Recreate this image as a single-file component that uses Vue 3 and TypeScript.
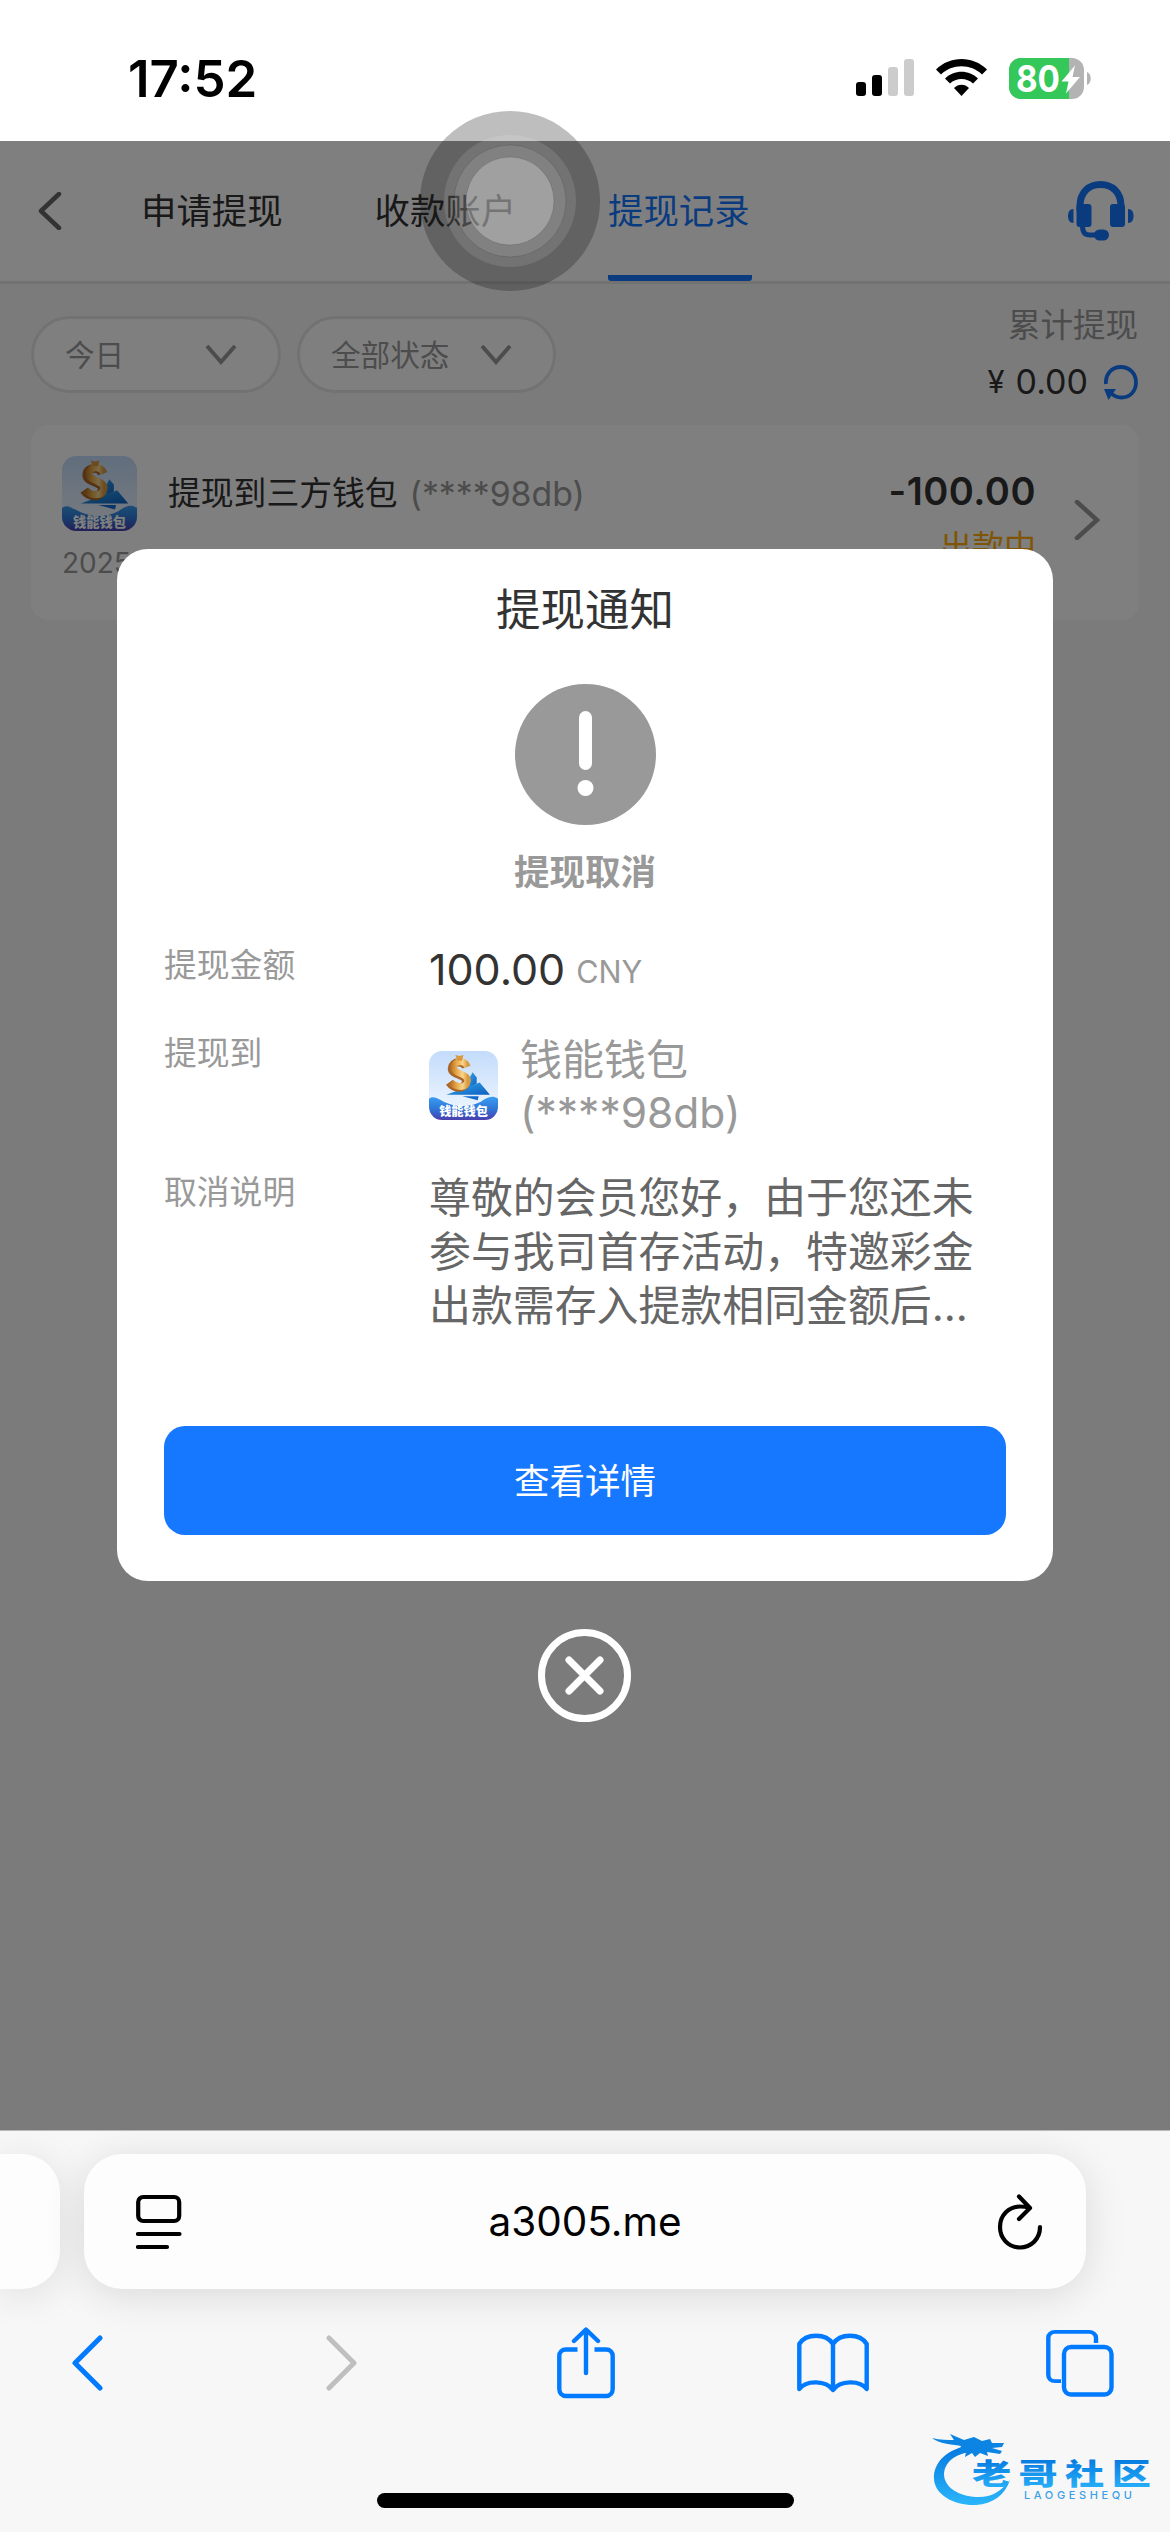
<script setup lang="ts">
import { ref } from 'vue'

const tabs = ['申请提现', '收款账户', '提现记录']
const activeTab = ref(2)

const filters = [
  { label: '今日', size: 'short' },
  { label: '全部状态', size: 'long' },
]

const showNotice = ref(true)
const reason = '尊敬的会员您好，由于您还未参与我司首存活动，特邀彩金出款需存入提款相同金额后...'
</script>

<template>
  <div class="phone">
    <!-- shared artwork of the wallet icon -->
    <svg class="defs" width="0" height="0">
      <defs>
        <linearGradient id="wSky" x1="0" y1="0" x2="0" y2="1">
          <stop offset="0" stop-color="#c3dcfb" />
          <stop offset="1" stop-color="#f4f9ff" />
        </linearGradient>
        <linearGradient id="wSea" x1="0" y1="0" x2="0" y2="1">
          <stop offset="0" stop-color="#3a9df0" />
          <stop offset="0.5" stop-color="#2f78d8" />
          <stop offset="1" stop-color="#4a3fae" />
        </linearGradient>
        <linearGradient id="wGold" x1="0" y1="0" x2="1" y2="0">
          <stop offset="0" stop-color="#b87426" />
          <stop offset="0.35" stop-color="#e9a94a" />
          <stop offset="0.7" stop-color="#f8d58c" />
          <stop offset="1" stop-color="#d99a40" />
        </linearGradient>
        <linearGradient id="wBlue" x1="0" y1="0" x2="1" y2="1">
          <stop offset="0" stop-color="#35a8ee" />
          <stop offset="1" stop-color="#0d5fc0" />
        </linearGradient>
        <clipPath id="wClip"><rect width="68" height="68" rx="13" /></clipPath>
        <symbol id="wallet" viewBox="0 0 68 68">
          <g clip-path="url(#wClip)">
            <rect width="68" height="68" fill="url(#wSky)" />
            <path d="M0 47C5 43 10 48 17 51C28 56 42 55 51 50C57 46 62 43 68 47V68H0Z" fill="url(#wSea)" />
            <path d="M38 30L43 21L47 26V32L40 36Z" fill="url(#wBlue)" />
            <path d="M17 43L50 31L60 43Z" fill="url(#wBlue)" />
            <path d="M33 44.500L49 44.500L48 48.500Z" fill="#1269cc" />
            <path d="M36.500 16C34 9 23 10 22.500 17C22 24 37 23 36.500 30C36 38 25 38 20 31" fill="none" stroke="#a8662a" stroke-width="8" />
            <path d="M38 15.500C35 8.500 25 9 24.500 16C24 23 39 22 38 29.500C37 37 27 36.500 21.500 31" fill="none" stroke="url(#wGold)" stroke-width="6.500" />
            <path d="M26 4L30 5L34 4L32.500 9.500H28Z" fill="#d9983e" />
            <text x="34" y="64.500" text-anchor="middle" class="wallet-name">钱能钱包</text>
          </g>
        </symbol>
      </defs>
    </svg>

    <div class="statusbar">
      <span class="clock">17:52</span>
      <div class="indicators">
        <svg width="58" height="38" viewBox="0 0 58 38">
          <rect x="0" y="23" width="10" height="14" rx="3" />
          <rect x="16" y="16" width="10" height="21" rx="3" />
          <rect x="32" y="8" width="10" height="29" rx="3" fill="#ccc" />
          <rect x="48" y="0" width="10" height="37" rx="3" fill="#ccc" />
        </svg>
        <svg width="51" height="38" viewBox="0 0 51 38">
          <path d="M0 10.500C14-3.500 37-3.500 51 10.500L46 15.500C35 4.500 16 4.500 5 15.500Z" />
          <path d="M9 19.500C18 10.500 33 10.500 42 19.500L37 24.500C31 18.500 20 18.500 14 24.500Z" />
          <path d="M18 29C22 24.500 29 24.500 33 29L25.500 37Z" />
        </svg>
        <svg class="battery" width="83" height="41" viewBox="0 0 83 41">
          <clipPath id="bat"><rect width="75" height="41" rx="12" /></clipPath>
          <g clip-path="url(#bat)">
            <rect width="75" height="41" fill="#b3b3b3" />
            <rect width="60" height="41" fill="#34c759" />
          </g>
          <path d="M78 14C83 16 83 25 78 27Z" fill="#b3b3b3" />
          <text x="7" y="34" textLength="44" lengthAdjust="spacingAndGlyphs" class="battery-text">80</text>
          <path d="M66 7.500L52.500 23.500H59.500L57 35.500L71 19H63.500Z" fill="#fff" />
        </svg>
      </div>
    </div>

    <div class="page">
      <div class="header">
        <svg class="back" width="24" height="38" viewBox="0 0 24 38">
          <path d="M21 2L3 19L21 36" />
        </svg>
        <div class="tabs">
          <span
            v-for="(tab, i) in tabs"
            :key="tab"
            :class="['tab', { active: i === activeTab }]"
            @click="activeTab = i"
          >{{ tab }}</span>
        </div>
        <svg class="service" width="68" height="60" viewBox="0 0 68 60">
          <path d="M13 30V25C13 11 22 3.500 33.500 3.500C45 3.500 54 11 54 25V30" fill="none" stroke="#1677ff" stroke-width="7" />
          <rect x="9.500" y="23" width="15" height="23" rx="3" />
          <rect x="43" y="23" width="15" height="23" rx="3" />
          <path d="M6.500 28V42C2.500 42 1 39 1 35C1 31 2.500 28 6.500 28Z" />
          <path d="M61 28V42C65 42 66.500 39 66.500 35C66.500 31 65 28 61 28Z" />
          <path d="M15.500 45C15.500 51.500 18 54 23 54H30" fill="none" stroke="#1677ff" stroke-width="5" />
          <rect x="27" y="48.500" width="15" height="11" rx="5.500" />
        </svg>
      </div>

      <div class="toolbar">
        <div class="filters">
          <div v-for="f in filters" :key="f.label" :class="['filter', f.size]">
            <span>{{ f.label }}</span>
            <svg width="32" height="22" viewBox="0 0 32 22">
              <path d="M2 2L16 18L30 2" />
            </svg>
          </div>
        </div>
        <div class="total">
          <span class="total-label">累计提现</span>
          <div class="total-row">
            <span class="yen">¥</span>
            <span class="total-value">0.00</span>
            <svg width="34" height="35" viewBox="0 0 34 35">
              <path d="M2 19C1 10 7 2 17 2C25.500 2 32 8.500 32 17.500C32 26 26 32.500 17.500 32.500C13.500 32.500 10 31 7.500 28.500" fill="none" stroke="#1677ff" stroke-width="3.800" />
              <path d="M0 24H12L4.500 35Z" fill="#1677ff" />
            </svg>
          </div>
        </div>
      </div>

      <div class="record">
        <div class="record-left">
          <div class="record-title">
            <svg width="75" height="75"><use href="#wallet" /></svg>
            <span class="record-name">提现到三方钱包</span>
            <span class="record-account">(****98db)</span>
          </div>
          <span class="record-date">2025</span>
        </div>
        <div class="record-right">
          <span class="record-amount">-100.00</span>
          <span class="record-state">出款中</span>
        </div>
        <svg class="record-arrow" width="27" height="40" viewBox="0 0 27 40">
          <path d="M3 2L23 20L3 38" />
        </svg>
      </div>

      <div v-if="showNotice" class="overlay">
        <div class="modal">
          <div class="modal-title">提现通知</div>
          <svg class="warn" width="141" height="141" viewBox="0 0 141 141">
            <circle cx="70.500" cy="70.500" r="70.500" fill="#999" />
            <rect x="64" y="27" width="13" height="59" rx="6.500" fill="#fff" />
            <circle cx="70.500" cy="104" r="8" fill="#fff" />
          </svg>
          <div class="modal-state">提现取消</div>

          <div class="row row-amount">
            <span class="label">提现金额</span>
            <div class="amount">100.00<span class="currency">CNY</span></div>
          </div>
          <div class="row row-target">
            <span class="label">提现到</span>
            <div class="target">
              <svg width="69" height="69"><use href="#wallet" /></svg>
              <div>
                <div class="target-name">钱能钱包</div>
                <div class="target-account">(****98db)</div>
              </div>
            </div>
          </div>
          <div class="row">
            <span class="label">取消说明</span>
            <p class="reason">{{ reason }}</p>
          </div>

          <button class="detail">查看详情</button>
        </div>
        <svg class="close" width="93" height="93" viewBox="0 0 93 93" @click="showNotice = false">
          <circle cx="46.500" cy="46.500" r="43" />
          <path d="M31 31L62 62M62 31L31 62" />
        </svg>
      </div>
    </div>

    <div class="browser">
      <div class="address-row">
        <div class="prev-card"></div>
        <div class="address">
          <svg width="46" height="56" viewBox="0 0 46 56" class="stroke-dark">
            <rect x="2.200" y="3" width="41" height="24" rx="5" />
            <path d="M2 40H43.500M2 53H31" />
          </svg>
          <span class="url">a3005.me</span>
          <svg width="46" height="56" viewBox="0 0 46 56" class="stroke-dark">
            <path d="M43 33C43 45 34 53.500 23 53.500C11 53.500 3 44 3 33C3 21 12 12.500 23 12.500C27 12.500 30 13 32.500 14M22 2.500L33 14L22 25" />
          </svg>
        </div>
      </div>

      <div class="actions">
        <svg width="32" height="56" viewBox="0 0 32 56" class="stroke-blue">
          <path d="M29 3L4 28L29 53" />
        </svg>
        <svg width="32" height="56" viewBox="0 0 32 56" class="stroke-grey">
          <path d="M3 3L28 28L3 53" />
        </svg>
        <svg width="58" height="72" viewBox="0 0 58 72" class="stroke-blue thin">
          <path d="M20.500 22.500H9C5 22.500 2.300 25 2.300 29V62C2.300 66 5 69 9 69H49C53 69 55.700 66 55.700 62V29C55.700 25 53 22.500 49 22.500H37.500" stroke-linecap="butt" />
          <path d="M29 46V3M17 14L29 2.500L41 14" />
        </svg>
        <svg width="72" height="60" viewBox="0 0 72 60" class="stroke-blue thin">
          <path d="M36 11C29 0 9 0 2.300 11V56C9 47 29 47 36 57C43 47 63 47 69.700 56V11C63 0 43 0 36 11ZM36 11V56" />
        </svg>
        <svg width="68" height="67" viewBox="0 0 68 67" class="stroke-blue thin">
          <path d="M50 15V9C50 5 47 2.300 43 2.300H9C5 2.300 2.300 5 2.300 9V52C2.300 57 5 59.500 9 59.500H15" stroke-linecap="butt" transform="scale(1 0.860)" />
          <rect x="18" y="17" width="47.500" height="47.500" rx="7" />
        </svg>
      </div>
      <div class="home-bar"></div>

      <!-- community mark in the corner -->
      <svg class="mark" width="230" height="84" viewBox="0 0 230 84">
        <defs>
          <linearGradient id="mk" x1="0" y1="0" x2="0" y2="1">
            <stop offset="0" stop-color="#0477de" />
            <stop offset="1" stop-color="#2bb6fc" />
          </linearGradient>
        </defs>
        <path d="M42 17C18 20 3 34 4 51C5 68 26 78 46 77C63 76 75 67 80 52C71 64 60 70 46 69C29 68 15 60 14 47C14 35 24 26 41 24Z" fill="url(#mk)" />
        <path d="M2 10C10 12 18 12 24 12L20 6L34 12L44 9L52 13L60 11L62 15L74 15L72 19L62 20L72 23L70 26L57 24L58 28L50 25L45 29L42 25L35 29L36 24L28 27L31 18C20 16 10 16 2 10Z" fill="#0b84e3" />
        <text transform="translate(42 57) scale(1.35 1)" class="mark-name" fill="url(#mk)">老哥社区</text>
        <text x="94" y="70.500" textLength="108" class="mark-latin">LAOGESHEQU</text>
      </svg>
    </div>

    <!-- floating assistive button -->
    <svg class="assistive" width="180" height="180" viewBox="0 0 180 180">
      <circle cx="90" cy="90" r="90" fill="#1a1a1a" fill-opacity="0.283" />
      <circle cx="90" cy="90" r="66" fill="#fff" fill-opacity="0.11" />
      <circle cx="90" cy="90" r="56" fill="#fff" fill-opacity="0.1" stroke="#000" stroke-opacity="0.12" />
      <circle cx="90" cy="90" r="44" fill="#fff" fill-opacity="0.25" stroke="#000" stroke-opacity="0.12" />
    </svg>
  </div>
</template>

<style>
body {
  margin: 0;
}
</style>

<style scoped>
.phone {
  position: relative;
  width: 1170px;
  height: 2532px;
  display: flex;
  flex-direction: column;
  overflow: hidden;
  background: #fff;
  font-family: Inter, 'Noto Sans CJK SC', sans-serif;
  color: #333;
}

svg {
  display: block;
  flex-shrink: 0;
}

.defs {
  position: absolute;
}

.wallet-name {
  font-size: 12px;
  font-weight: 900;
  fill: #fff;
}

/* status bar */
.statusbar {
  height: 141px;
  flex-shrink: 0;
  box-sizing: border-box;
  padding: 15px 78px 0 128px;
  display: flex;
  justify-content: space-between;
  align-items: center;
  color: #000;
}

.clock {
  font-size: 51px;
  font-weight: 600;
}

.indicators {
  display: flex;
  align-items: center;
  gap: 22px;
}

.battery {
  overflow: visible;
}

.battery-text {
  font-size: 37px;
  font-weight: 700;
  fill: #fff;
}

/* page */
.page {
  position: relative;
  height: 1989px;
  flex-shrink: 0;
  background: #f7f7f7;
}

.header {
  height: 140px;
  padding: 0 35px 0 38px;
  display: flex;
  align-items: center;
  background: #fff;
  border-bottom: 3px solid #e5e5e5;
}

.back {
  fill: none;
  stroke: #666;
  stroke-width: 4.5;
  stroke-linecap: round;
  stroke-linejoin: round;
}

.tabs {
  flex: 1;
  height: 100%;
  margin-left: 79px;
  display: flex;
  gap: 89.5px;
}

.tab {
  width: 144px;
  height: 134px;
  line-height: 141px;
  font-size: 35.4px;
  white-space: nowrap;
}

.tab.active {
  color: #1677ff;
  border-bottom: 6px solid #1677ff;
  border-radius: 3px;
}

.service {
  fill: #1677ff;
}

.toolbar {
  height: 141px;
  padding: 0 32px 0 31px;
  display: flex;
  justify-content: space-between;
}

.filters {
  display: flex;
  gap: 16px;
  padding-top: 32px;
}

.filter {
  height: 77px;
  box-sizing: border-box;
  padding: 0 41px 0 31px;
  display: flex;
  align-items: center;
  justify-content: space-between;
  border: 3px solid #e5e5e5;
  border-radius: 39px;
  background: #fff;
  font-size: 29.6px;
  line-height: 40px;
  color: #999;
}

.filter.short {
  width: 250px;
}

.filter.long {
  width: 259px;
}

.filter svg {
  fill: none;
  stroke: #999;
  stroke-width: 4;
}

.total {
  padding-top: 22px;
  display: flex;
  flex-direction: column;
  align-items: flex-end;
}

.total-label {
  font-size: 32.5px;
  line-height: 40px;
  color: #999;
}

.total-row {
  height: 70px;
  margin-top: 1px;
  display: flex;
  align-items: center;
}

.yen {
  width: 28px;
  font-size: 31px;
  line-height: 70px;
}

.total-value {
  margin-right: 16px;
  font-size: 34px;
  line-height: 70px;
}

.record {
  height: 195px;
  box-sizing: border-box;
  margin: 0 31px;
  padding: 0 38px 0 31px;
  display: flex;
  border-radius: 18px;
  background: #fff;
}

.record-left {
  flex: 1;
  padding-top: 31px;
}

.record-title {
  display: flex;
  align-items: center;
  font-size: 32.8px;
  line-height: 75px;
}

.record-name {
  margin-left: 31px;
}

.record-account {
  margin-left: 12px;
  font-size: 33.8px;
  color: #999;
}

.record-date {
  display: block;
  margin-top: 12px;
  font-size: 28px;
  line-height: 40px;
  color: #999;
}

.record-right {
  padding-top: 41px;
  display: flex;
  flex-direction: column;
  align-items: flex-end;
}

.record-amount {
  font-size: 38px;
  line-height: 50px;
  font-weight: 600;
  letter-spacing: 0.5px;
}

.record-state {
  margin-top: 9px;
  font-size: 32px;
  line-height: 44px;
  color: #ffaa09;
}

.record-arrow {
  margin: 75px 0 0 38px;
  fill: none;
  stroke: #999;
  stroke-width: 4.5;
  stroke-linecap: round;
}

/* notice */
.overlay {
  position: absolute;
  inset: 0;
  display: flex;
  flex-direction: column;
  align-items: center;
  justify-content: center;
  background: rgba(0, 0, 0, 0.5);
}

.modal {
  width: 936px;
  height: 1032px;
  box-sizing: border-box;
  padding: 1px 47px 0;
  border-radius: 31px;
  background: #fff;
}

.modal-title {
  font-size: 44.5px;
  line-height: 120px;
  text-align: center;
}

.warn {
  margin: 14px auto 0;
}

.modal-state {
  margin-top: 23px;
  font-size: 35.5px;
  line-height: 50px;
  font-weight: 600;
  text-align: center;
  color: #999;
}

.row {
  display: flex;
}

.row-amount {
  height: 60px;
  margin: 42px 0 28px;
}

.row-target {
  height: 111px;
  margin-bottom: 28px;
}

.label {
  width: 265px;
  flex-shrink: 0;
  font-size: 32.8px;
  line-height: 50px;
  color: #999;
}

.amount {
  font-size: 43px;
  line-height: 59px;
}

.currency {
  margin-left: 11px;
  font-size: 30.6px;
  vertical-align: 2px;
  color: #999;
}

.target {
  padding-top: 4px;
  display: flex;
  align-items: center;
  gap: 22px;
  font-size: 42px;
  line-height: 53px;
  color: #999;
}

.target-account {
  font-size: 42.5px;
}

.reason {
  margin: 4px 0 0;
  font-size: 41.9px;
  line-height: 54px;
  color: #666;
}

.detail {
  width: 842px;
  height: 109px;
  margin-top: 93px;
  padding: 0 0 4px;
  border: none;
  border-radius: 21px;
  background: #1677ff;
  color: #fff;
  font-family: inherit;
  font-size: 35.5px;
}

.close {
  margin: 48px 2px 0 0;
  fill: none;
  stroke: #fff;
  stroke-width: 7;
  stroke-linecap: round;
}

/* browser chrome */
.browser {
  position: relative;
  flex: 1;
  display: flex;
  flex-direction: column;
  box-sizing: border-box;
  border-top: 1px solid #b9b9b9;
  background: #f7f7f7;
  overflow: hidden;
}

.address-row {
  display: flex;
  gap: 24px;
  padding-top: 23px;
}

.prev-card {
  width: 60px;
  height: 135px;
  border-radius: 0 38px 38px 0;
  background: #fdfdfd;
  box-shadow: 0 6px 42px rgba(0, 0, 0, 0.1);
}

.address {
  width: 1002px;
  height: 135px;
  box-sizing: border-box;
  padding: 0 43px 0 52px;
  display: flex;
  align-items: center;
  justify-content: space-between;
  border-radius: 38px;
  background: #fdfdfd;
  box-shadow: 0 6px 42px rgba(0, 0, 0, 0.12);
}

.url {
  margin-right: 9px;
  font-size: 40.5px;
  color: #000;
}

.stroke-dark,
.stroke-blue,
.stroke-grey {
  fill: none;
  stroke-width: 5;
  stroke-linecap: round;
  stroke-linejoin: round;
}

.stroke-dark {
  stroke: #000;
  stroke-width: 4.2;
}

.stroke-blue {
  stroke: #007aff;
}

.stroke-grey {
  stroke: #bfbfbf;
}

.thin {
  stroke-width: 4.4;
}

.actions {
  height: 72px;
  margin-top: 38px;
  padding-left: 71px;
  display: grid;
  grid-template-columns: 255px 231px 240px 249px 68px;
  align-items: center;
}

.home-bar {
  width: 417px;
  height: 15px;
  margin: 94px auto 0;
  border-radius: 8px;
  background: #000;
}

.mark {
  position: absolute;
  right: 10px;
  bottom: 20px;
}

.mark-name {
  font-size: 29px;
  font-weight: 900;
  letter-spacing: 5.5px;
}

.mark-latin {
  font-size: 11px;
  font-weight: 500;
  fill: #3c9fe8;
}

.assistive {
  position: absolute;
  left: 420px;
  top: 111px;
}
</style>
